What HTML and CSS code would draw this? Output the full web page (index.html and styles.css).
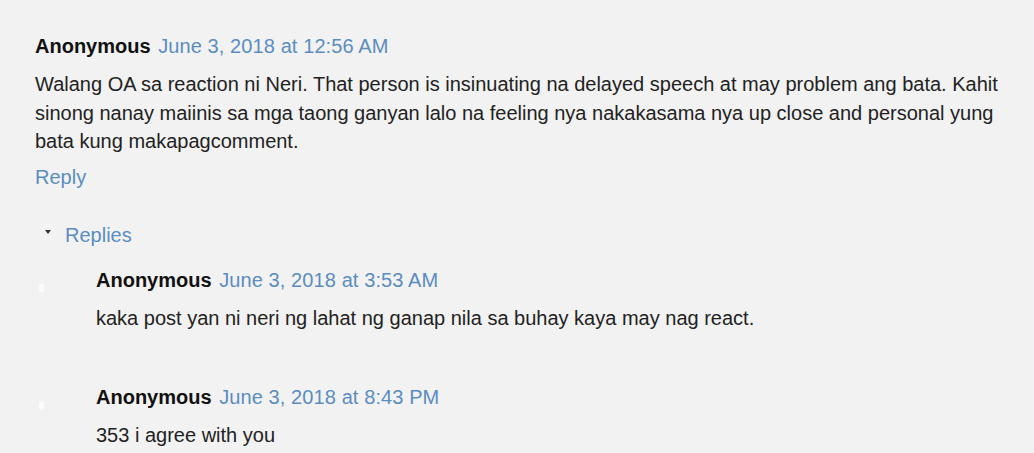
FILE: index.html
```html
<!DOCTYPE html>
<html>
<head>
<meta charset="utf-8">
<link rel="stylesheet" href="styles.css">
</head>
<body>
<div class="thread">
  <div class="comment">
    <div class="header"><span class="user">Anonymous</span> <a class="date" href="#">June 3, 2018 at 12:56 AM</a></div>
    <p class="content">Walang OA sa reaction ni Neri. That person is insinuating na delayed speech at may problem ang bata. Kahit sinong nanay maiinis sa mga taong ganyan lalo na feeling nya nakakasama nya up close and personal yung bata kung makapagcomment.</p>
    <a class="reply-link" href="#">Reply</a>
  </div>
  <div class="replies-toggle"><span class="tri"></span><a class="replies-link" href="#">Replies</a></div>
  <div class="reply">
    <span class="avatar"></span>
    <div class="header"><span class="user">Anonymous</span> <a class="date" href="#">June 3, 2018 at 3:53 AM</a></div>
    <p class="content">kaka post yan ni neri ng lahat ng ganap nila sa buhay kaya may nag react.</p>
  </div>
  <div class="reply">
    <span class="avatar"></span>
    <div class="header"><span class="user">Anonymous</span> <a class="date" href="#">June 3, 2018 at 8:43 PM</a></div>
    <p class="content">353 i agree with you</p>
  </div>
</div>
</body>
</html>
```

FILE: styles.css
```css
html, body {
  margin: 0;
  padding: 0;
  background: #f2f2f2;
}
body {
  font-family: "Liberation Sans", Arial, sans-serif;
  font-size: 20px;
  color: #222;
}
a { text-decoration: none; color: #5b8dbf; }
.thread {
  padding: 32px 0 0 35px;
}
.header {
  line-height: 28px;
}
.user {
  font-weight: bold;
  color: #111;
}
.date {
  margin-left: 2px;
  letter-spacing: 0.1px;
}
.content {
  margin: 10px 0 0 0;
  line-height: 28.5px;
}
.reply-link {
  display: block;
  margin-top: 7px;
  line-height: 28px;
}
.replies-toggle {
  display: flex;
  align-items: center;
  margin-top: 30px;
  line-height: 28px;
}
.tri {
  width: 0;
  height: 0;
  border-left: 3px solid transparent;
  border-right: 3px solid transparent;
  border-top: 4px solid #333;
  margin: 0 14px 6px 10px;
}
.reply {
  position: relative;
  margin-left: 61px;
  margin-top: 17px;
}
.reply + .reply {
  margin-top: 51px;
}
.reply .content {
  margin-top: 10px;
}
.avatar {
  position: absolute;
  left: -57px;
  top: 18px;
  width: 5px;
  height: 8px;
  border-radius: 2px;
  background: #fbfbfb;
}
```
